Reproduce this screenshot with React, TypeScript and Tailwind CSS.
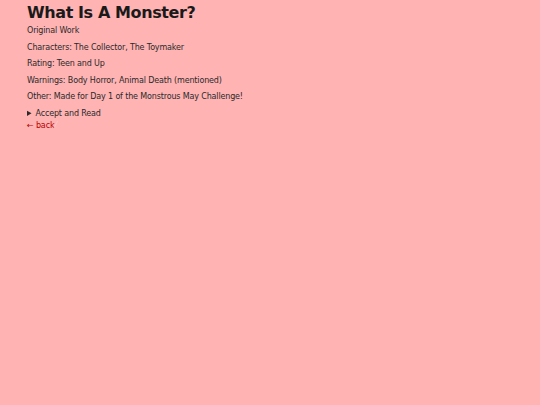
import React from "react";

const meta = [
  "Original Work",
  "Characters: The Collector, The Toymaker",
  "Rating: Teen and Up",
  "Warnings: Body Horror, Animal Death (mentioned)",
  "Other: Made for Day 1 of the Monstrous May Challenge!",
];

export default function App() {
  return (
    <div className="min-h-screen bg-[#ffb3b3] px-[27px] pt-[2px] text-[#2a2a2a] font-['DejaVu_Sans',sans-serif] text-[8px] tracking-[-0.15px] leading-[11px]">
      <h1 className="text-[16px] leading-[22px] tracking-[-0.4px] font-bold text-[#1a1a1a]">What Is A Monster?</h1>
      {meta.map((line, i) => (
        <p key={line} className={i === 0 ? "mt-[1px]" : "mt-[5.5px]"}>{line}</p>
      ))}
      <details className="mt-[6px]">
        <summary className="cursor-pointer">Accept and Read</summary>
      </details>
      <a href="#" className="text-[#b80000] inline-flex items-center mt-[1px]">
        ← back<span className="text-[#ffcfcf] ml-[1px]">⁄</span>
      </a>
    </div>
  );
}
